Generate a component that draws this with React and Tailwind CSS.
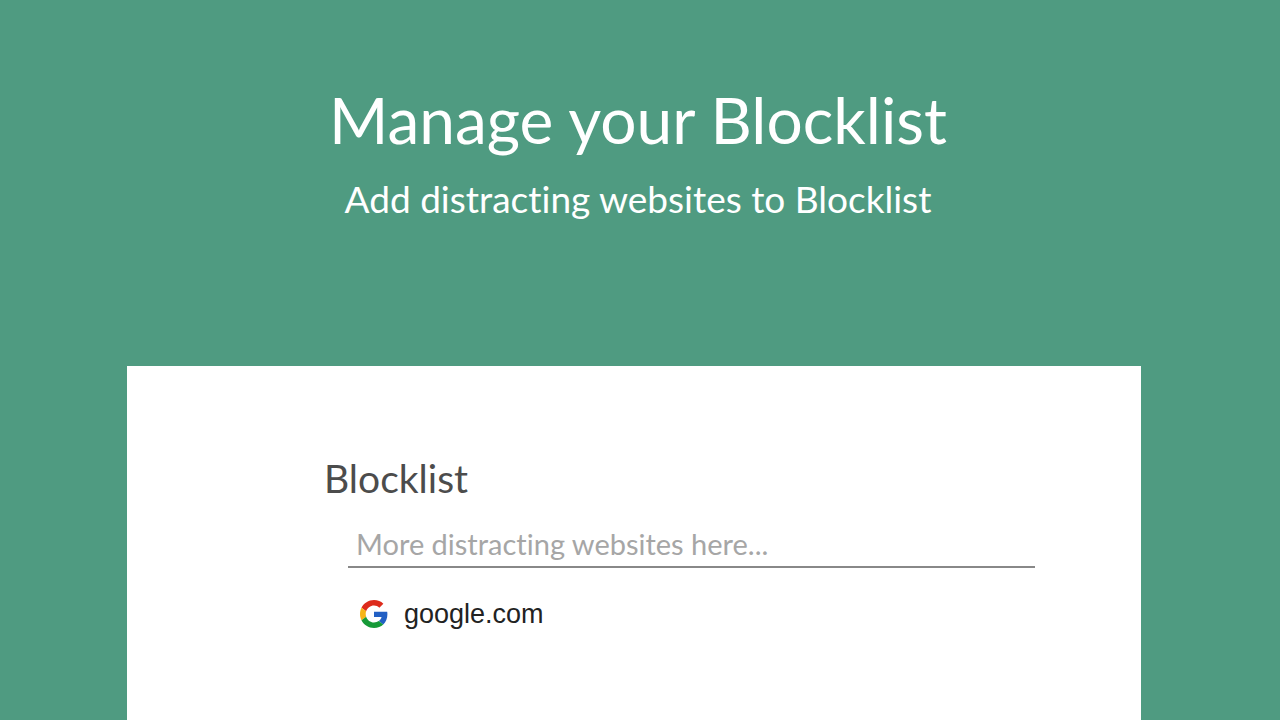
const sites = [{ name: 'google.com', Icon: GoogleIcon }];

function GoogleIcon() {
  return (
    <svg viewBox="0 0 48 48" className="h-7 w-7" aria-hidden="true">
      <path fill="#dd2b1c" d="M24 9.5c3.54 0 6.71 1.22 9.21 3.6l6.85-6.85C35.9 2.38 30.47 0 24 0 14.62 0 6.51 5.38 2.56 13.22l7.98 6.19C12.43 13.72 17.74 9.5 24 9.5z" />
      <path fill="#2260c4" d="M46.98 24.55c0-1.57-.15-3.09-.38-4.55H24v9.02h12.94c-.58 2.96-2.26 5.48-4.78 7.18l7.73 6c4.51-4.18 7.09-10.36 7.09-17.65z" />
      <path fill="#f6b518" d="M10.53 28.59c-.48-1.45-.76-2.99-.76-4.59s.27-3.14.76-4.59l-7.98-6.19C.92 16.46 0 20.12 0 24c0 3.88.92 7.54 2.56 10.78l7.97-6.19z" />
      <path fill="#169a38" d="M24 48c6.48 0 11.93-2.13 15.89-5.81l-7.73-6c-2.15 1.45-4.92 2.3-8.16 2.3-6.26 0-11.57-4.22-13.47-9.91l-7.98 6.19C6.51 42.62 14.62 48 24 48z" />
    </svg>
  );
}

export default function App() {
  return (
    <div className="flex min-h-screen flex-col bg-[#4f9b81] font-['Lato',sans-serif] [font-variant-ligatures:none]">
      <header className="flex flex-col items-center pt-[78px] pr-1 pb-[138px] text-center text-white">
        <h1 className="text-[64px] leading-[84px]">Manage your Blocklist</h1>
        <p className="mt-2 text-[37px] leading-[58px]">Add distracting websites to Blocklist</p>
      </header>
      <main className="mr-[139px] ml-[127px] grow bg-white pt-[88px] pr-[106px] pl-[197px]">
        <h2 className="text-[39px] leading-[48px] text-[#4c4c4c]">Blocklist</h2>
        <div className="pl-6">
          <input
            type="text"
            aria-label="Add website"
            placeholder="More distracting websites here..."
            className="mt-[18px] h-12 w-full border-b-2 border-[#888888] px-2 text-[29px] outline-none placeholder:text-[#a6a6a6]"
          />
          <ul className="mt-6 pl-3">
            {sites.map(({ name, Icon }) => (
              <li key={name} className="flex items-center gap-4">
                <Icon />
                <span className="font-['Liberation_Sans',sans-serif] text-[27px] leading-11 text-[#222222]">{name}</span>
              </li>
            ))}
          </ul>
        </div>
      </main>
    </div>
  );
}
